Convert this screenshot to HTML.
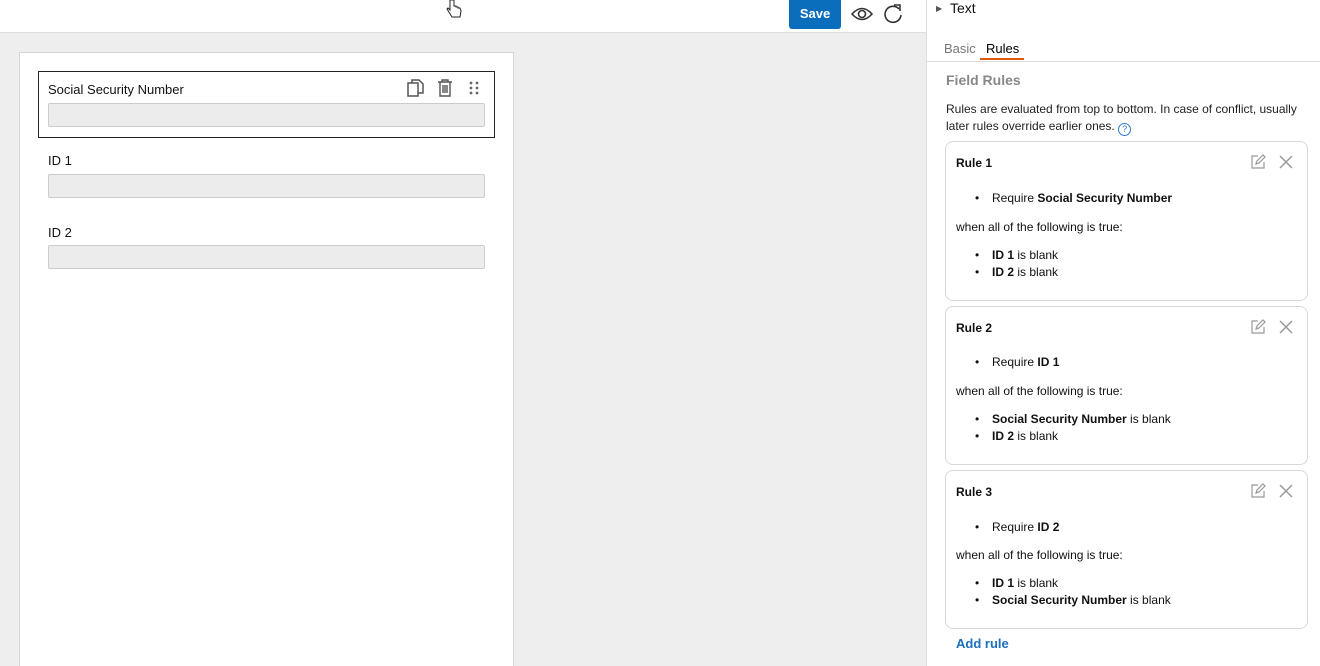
<!DOCTYPE html>
<html><head><style>
*{box-sizing:border-box;margin:0;padding:0}
html,body{width:1320px;height:666px;overflow:hidden}
body{font-family:"Liberation Sans",sans-serif;background:#fff;position:relative;color:#111}
.top{position:absolute;left:0;top:0;width:926px;height:33px;background:#fff;border-bottom:1px solid #ddd}
.left{position:absolute;left:0;top:33px;width:926px;height:633px;background:#eeeeee}
.canvas{position:absolute;left:19px;top:52px;width:495px;height:614px;background:#fff;border:1px solid #d6d6d6;border-bottom:none}
.save{position:absolute;left:789px;top:0;width:52px;height:29px;background:#0a6ebd;color:#fff;font-weight:bold;font-size:13px;text-align:center;line-height:28px;border-radius:0 0 3px 3px}
.fld{position:absolute;left:38px;width:457px}
.lbl{font-size:13px;position:absolute;left:10px}
.inp{position:absolute;left:10px;width:437px;height:24px;background:#ececec;border:1px solid #ccc;border-radius:2px}
.right{position:absolute;left:926px;top:0;width:394px;height:666px;border-left:1px solid #ddd;background:#fff}
.card{position:absolute;left:18px;width:363px;border:1px solid #d8d8d8;border-radius:8px;font-size:12px}
.card b{font-weight:bold}
.card .t{position:absolute;left:10px;top:14px;font-weight:bold;font-size:12px}
.card .l{position:absolute;left:46px}
.card .l:before{content:"•";position:absolute;left:-17px}
.card .w{position:absolute;left:10px}
.ic{position:absolute;top:12px}
</style></head><body>
<div class="top"></div>
<div class="left"></div>
<svg style="position:absolute;left:444px;top:0" width="20" height="20" viewBox="0 0 20 20"><path d="M6 0v10l-2-2-1 1 5 8h8l1-6-1-3-2 0v-1h-2v-1h-2V0z" fill="#fff" stroke="#222" stroke-width="1"/></svg>
<div class="save">Save</div>
<svg style="position:absolute;left:851px;top:5px" width="22" height="18" viewBox="0 0 22 18"><path d="M1 9Q11-2 21 9Q11 20 1 9Z" fill="none" stroke="#333" stroke-width="1.6"/><circle cx="11" cy="9" r="3.5" fill="none" stroke="#333" stroke-width="1.6"/></svg>
<svg style="position:absolute;left:882px;top:3px" width="22" height="22" viewBox="0 0 22 22"><path d="M17 6A8 8 0 1 0 19 12" fill="none" stroke="#333" stroke-width="1.6"/><path d="M12 2h6v6" fill="none" stroke="#333" stroke-width="1.6"/></svg>
<div class="canvas"></div>
<div class="fld" style="top:71px;height:67px;border:1px solid #222;width:457px">
<div class="lbl" style="top:10px;left:9px">Social Security Number</div>
<svg style="position:absolute;left:367px;top:6px" width="20" height="20" viewBox="0 0 20 20"><rect x="2" y="5" width="10" height="13" fill="none" stroke="#555" stroke-width="1.5"/><path d="M6 5V2h7l4 4v9h-5" fill="none" stroke="#555" stroke-width="1.5"/></svg>
<svg style="position:absolute;left:397px;top:6px" width="18" height="20" viewBox="0 0 18 20"><path d="M2 4h14M6 4V2h6v2M4 4v14h10V4M7 7v8M9 7v8M11 7v8" fill="none" stroke="#555" stroke-width="1.4"/></svg>
<svg style="position:absolute;left:429px;top:8px" width="12" height="16"><g fill="#666"><circle cx="3" cy="3" r="1.4"/><circle cx="9" cy="3" r="1.4"/><circle cx="3" cy="8" r="1.4"/><circle cx="9" cy="8" r="1.4"/><circle cx="3" cy="13" r="1.4"/><circle cx="9" cy="13" r="1.4"/></g></svg>
<div class="inp" style="top:31px;left:9px"></div></div>
<div class="fld" style="top:142px;height:60px"><div class="lbl" style="top:11px">ID 1</div><div class="inp" style="top:32px"></div></div>
<div class="fld" style="top:214px;height:60px"><div class="lbl" style="top:11px">ID 2</div><div class="inp" style="top:31px"></div></div>

<div class="right">
<div style="position:absolute;left:9px;top:4px;font-size:8px;color:#555">▶</div>
<div style="position:absolute;left:23px;top:0px;font-size:14px">Text</div>
<div style="position:absolute;left:17px;top:41px;font-size:13px;color:#777">Basic</div>
<div style="position:absolute;left:59px;top:41px;font-size:13px;color:#000">Rules</div>
<div style="position:absolute;left:53px;top:58px;width:44px;height:2px;background:#e0570f"></div>
<div style="position:absolute;left:0;top:61px;width:394px;height:1px;background:#ddd"></div>
<div style="position:absolute;left:19px;top:72px;font-size:14px;font-weight:bold;color:#888">Field Rules</div>
<div style="position:absolute;left:19px;top:101px;width:370px;font-size:12px;line-height:17px;color:#222">Rules are evaluated from top to bottom. In case of conflict, usually later rules override earlier ones. <span style="display:inline-block;width:13px;height:13px;border:1px solid #2a78c8;border-radius:50%;color:#2a78c8;font-size:9px;text-align:center;line-height:11px;vertical-align:-2px">?</span></div>

<div class="card" style="top:141px;height:160px">
<div class="t">Rule 1</div>
<svg class="ic" style="left:304px" width="16" height="16" viewBox="0 0 16 16"><path d="M8 2H2v12h12V8M6 10l1-3 6-6 2 2-6 6z" fill="none" stroke="#999" stroke-width="1.2"/></svg>
<svg class="ic" style="left:332px" width="16" height="16" viewBox="0 0 16 16"><path d="M2 2L14 14M14 2L2 14" stroke="#999" stroke-width="1.5"/></svg>
<div class="l" style="top:49px">Require <b>Social Security Number</b></div>
<div class="w" style="top:78px">when all of the following is true:</div>
<div class="l" style="top:106px"><b>ID 1</b> is blank</div>
<div class="l" style="top:123px"><b>ID 2</b> is blank</div>
</div>
<div class="card" style="top:306px;height:159px">
<div class="t">Rule 2</div>
<svg class="ic" style="left:304px" width="16" height="16" viewBox="0 0 16 16"><path d="M8 2H2v12h12V8M6 10l1-3 6-6 2 2-6 6z" fill="none" stroke="#999" stroke-width="1.2"/></svg>
<svg class="ic" style="left:332px" width="16" height="16" viewBox="0 0 16 16"><path d="M2 2L14 14M14 2L2 14" stroke="#999" stroke-width="1.5"/></svg>
<div class="l" style="top:48px">Require <b>ID 1</b></div>
<div class="w" style="top:77px">when all of the following is true:</div>
<div class="l" style="top:105px"><b>Social Security Number</b> is blank</div>
<div class="l" style="top:122px"><b>ID 2</b> is blank</div>
</div>
<div class="card" style="top:470px;height:159px">
<div class="t">Rule 3</div>
<svg class="ic" style="left:304px" width="16" height="16" viewBox="0 0 16 16"><path d="M8 2H2v12h12V8M6 10l1-3 6-6 2 2-6 6z" fill="none" stroke="#999" stroke-width="1.2"/></svg>
<svg class="ic" style="left:332px" width="16" height="16" viewBox="0 0 16 16"><path d="M2 2L14 14M14 2L2 14" stroke="#999" stroke-width="1.5"/></svg>
<div class="l" style="top:49px">Require <b>ID 2</b></div>
<div class="w" style="top:77px">when all of the following is true:</div>
<div class="l" style="top:105px"><b>ID 1</b> is blank</div>
<div class="l" style="top:122px"><b>Social Security Number</b> is blank</div>
</div>
<div style="position:absolute;left:29px;top:636px;font-size:13px;font-weight:bold;color:#1a6fc0">Add rule</div>
</div>
</body></html>
